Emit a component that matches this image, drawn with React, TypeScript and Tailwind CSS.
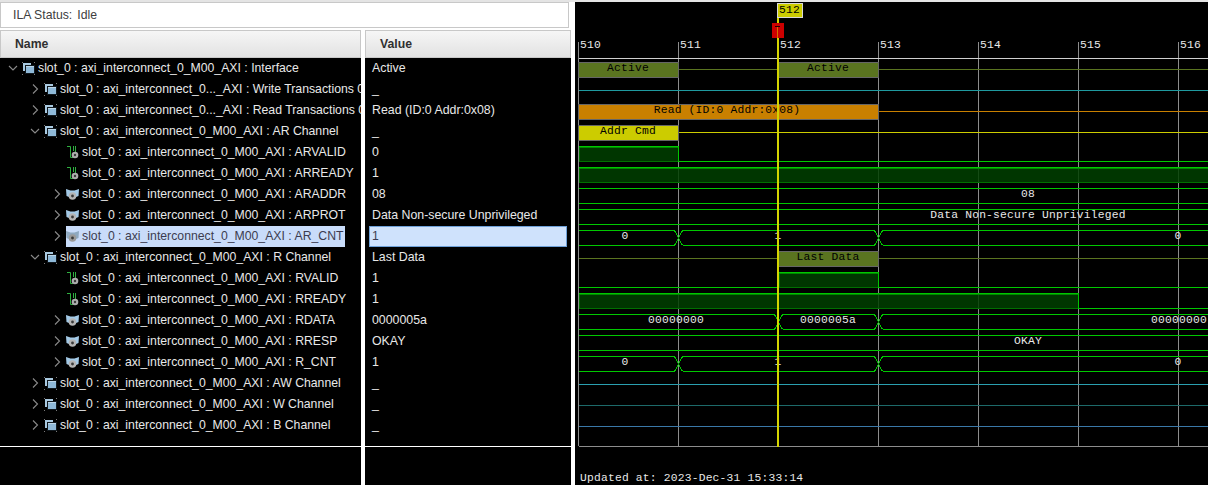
import React from "react";

type Kind = "group" | "bit" | "bus";
type Row = { level: 0 | 1 | 2; open?: boolean; leaf?: boolean; kind: Kind; name: string; value: string; selected?: boolean };

const P = "slot_0 : axi_interconnect_0_M00_AXI : ";
const rows: Row[] = [
  { level: 0, open: true, kind: "group", name: P + "Interface", value: "Active" },
  { level: 1, kind: "group", name: "slot_0 : axi_interconnect_0..._AXI : Write Transactions 0", value: "_" },
  { level: 1, kind: "group", name: "slot_0 : axi_interconnect_0..._AXI : Read Transactions 0", value: "Read (ID:0 Addr:0x08)" },
  { level: 1, open: true, kind: "group", name: P + "AR Channel", value: "_" },
  { level: 2, leaf: true, kind: "bit", name: P + "ARVALID", value: "0" },
  { level: 2, leaf: true, kind: "bit", name: P + "ARREADY", value: "1" },
  { level: 2, kind: "bus", name: P + "ARADDR", value: "08" },
  { level: 2, kind: "bus", name: P + "ARPROT", value: "Data Non-secure Unprivileged" },
  { level: 2, kind: "bus", name: P + "AR_CNT", value: "1", selected: true },
  { level: 1, open: true, kind: "group", name: P + "R Channel", value: "Last Data" },
  { level: 2, leaf: true, kind: "bit", name: P + "RVALID", value: "1" },
  { level: 2, leaf: true, kind: "bit", name: P + "RREADY", value: "1" },
  { level: 2, kind: "bus", name: P + "RDATA", value: "0000005a" },
  { level: 2, kind: "bus", name: P + "RRESP", value: "OKAY" },
  { level: 2, kind: "bus", name: P + "R_CNT", value: "1" },
  { level: 1, kind: "group", name: P + "AW Channel", value: "_" },
  { level: 1, kind: "group", name: P + "W Channel", value: "_" },
  { level: 1, kind: "group", name: P + "B Channel", value: "_" },
];

const indent = { 0: "pl-0", 1: "pl-[22px]", 2: "pl-[44px]" };

function Chevron({ open }: { open?: boolean }) {
  return (
    <svg width="12" height="12" viewBox="0 0 12 12" fill="none" stroke="#8a8a8a" strokeWidth="1.1" className="-mt-px">
      {open ? <path d="M2 4l4 4 4-4" /> : <path d="M4 1.5l4.5 4.5L4 10.5" />}
    </svg>
  );
}

function KindIcon({ kind, selected }: { kind: Kind; selected?: boolean }) {
  if (kind === "group")
    return (
      <svg width="13" height="13" viewBox="0 0 13 13" className="-mt-px shrink-0">
        <rect x="1" y="1" width="8" height="8" fill="#a9c9e0" />
        <rect x="3" y="3" width="10" height="9" fill="#10181e" />
        <rect x="4" y="4" width="8" height="7" fill="#8fb9d8" />
        <rect x="4" y="4" width="8" height="1" fill="#bcd6e8" />
        <path d="M0 0h1v1H0zM12 0h1v1h-1zM0 12h1v1H0zM12 12h1v1h-1z" fill="#7a7a7a" />
      </svg>
    );
  if (kind === "bit")
    return (
      <svg width="13" height="14" viewBox="0 0 13 14" className="-mt-px ml-px mr-[-1px] shrink-0">
        <path d="M0 1.5H3.5V12.5H6M8.5 1V7M6.5 1V6" fill="none" stroke="#2fb040" strokeWidth="1" />
        <circle cx="8" cy="10" r="3.3" fill="#adadad" />
        <circle cx="8" cy="10" r="1.2" fill="#3a3a3a" />
      </svg>
    );
  return (
    <svg width="13" height="13" viewBox="0 0 13 13" className="-mt-px shrink-0">
      <path d="M0 1L4.5 2.5H8.5L13 1 12.5 8 10 9H3L.5 8Z" fill={selected ? "#8fa9c0" : "#a3c9e6"} />
      <circle cx="6.5" cy="8" r="3.8" fill={selected ? "#9a9a9a" : "#b4b4b4"} />
      <circle cx="6.5" cy="8" r="1.4" fill="#3a3a3a" />
    </svg>
  );
}

function TreeRow({ r }: { r: Row }) {
  return (
    <div className={`flex h-[21px] items-center whitespace-nowrap ${indent[r.level]}`}>
      <div className="flex w-[22px] shrink-0 justify-center pl-1">{!r.leaf && <Chevron open={r.open} />}</div>
      <div className={`flex h-[21px] items-center gap-[3px] pr-[2px] ${r.selected ? "bg-[#c9dcfa] text-[#3c3c50]" : "text-[#e8e8e8]"}`}>
        <KindIcon kind={r.kind} selected={r.selected} />
        <span className="pb-px">{r.name}</span>
      </div>
    </div>
  );
}

function ValueRow({ r }: { r: Row }) {
  if (r.selected)
    return (
      <div className="ml-1 flex h-[21px] w-[198px] items-center border border-[#6ea0d8] bg-[#cfe2fc] pb-px pl-[2px] text-[#3c3c50]">{r.value}</div>
    );
  return <div className="flex h-[21px] items-center whitespace-nowrap pb-px pl-[7px] text-[12.35px] text-[#e8e8e8]">{r.value}</div>;
}

function Column({ title, width, children }: { title: string; width: string; children: React.ReactNode }) {
  return (
    <div className={`flex h-full shrink-0 flex-col bg-black ${width}`}>
      <div className="flex h-[28px] shrink-0 items-center border border-[#c8c8c8] bg-gradient-to-b from-[#f6f6f6] to-[#e2e2e2] pl-[14px] font-bold text-[#303030]">
        {title}
      </div>
      <div className="h-[388px] shrink-0 overflow-hidden">{children}</div>
      <div className="h-px shrink-0 bg-white" />
    </div>
  );
}

const X0 = 578.5;
const grid = [578.5, 678.5, 778.5, 878.5, 978.5, 1078.5, 1178.5];
const W = 1208;
const GREEN = "#00c800";

function Lbl({ x, y, t, fill = "#e8e8e8", anchor = "middle" }: { x: number; y: number; t: string; fill?: string; anchor?: "middle" | "start" }) {
  return (
    <text x={x} y={y} fill={fill} textAnchor={anchor} className="font-['Liberation_Mono',monospace] text-[11.3px] tracking-[0.2px]">
      {t}
    </text>
  );
}

function Bar({ x, y, w, fill }: { x: number; y: number; w: number; fill: string }) {
  return <rect x={x} y={y} width={w} height={15} fill={fill} stroke="#666" strokeWidth="1" />;
}

function HBar({ x, y, w }: { x: number; y: number; w: number }) {
  return (
    <g>
      <rect x={x} y={y} width={w} height={15} fill="#004000" fillOpacity="0.85" />
      <path d={`M${x + 1} ${y + 15}V${y}`} stroke="#007000" />
      <path d={`M${x} ${y + 15}H${x + w}`} stroke="#007000" />
      <path d={`M${x} ${y}H${x + w}`} stroke={GREEN} strokeWidth="1" />
      <path d={`M${x} ${y + 1}H${x + w}`} stroke="#008800" strokeWidth="1" />
      <path d={`M${x + w} ${y}V${y + 15}`} stroke={GREEN} />
    </g>
  );
}

function BusLines({ top, xs }: { top: number; xs: number[] }) {
  const y1 = top + 0.5;
  const y2 = top + 15.5;
  const d: string[] = [];
  let start = X0;
  for (const t of xs) {
    d.push(`M${start} ${y1}H${t - 4}L${t + 4} ${y2}`);
    d.push(`M${start} ${y2}H${t - 4}L${t + 4} ${y1}`);
    start = t + 4;
  }
  d.push(`M${start} ${y1}H${W}M${start} ${y2}H${W}`);
  return <path d={d.join("")} fill="none" stroke={GREEN} strokeWidth="1" />;
}

function Wave() {
  const hl = (y: number, c: string, x1 = X0) => <path d={`M${x1} ${y}H${W}`} stroke={c} strokeWidth="1" />;
  return (
    <svg width="633" height="483" viewBox="575 2 633 483" className="block" shapeRendering="crispEdges">
      <rect x="575" y="2" width="633" height="483" fill="#000" />
      {grid.map((g) => (
        <path key={g} d={`M${g} 42V446`} stroke="#8c8c8c" />
      ))}
      {hl(58.5, "#d0d0d0")}
      {[510, 511, 512, 513, 514, 515, 516].map((n, i) => (
        <Lbl key={n} x={grid[i] + 1.5} y={48} t={String(n)} anchor="start" />
      ))}

      {hl(69.5, "#5a7420")}
      <Bar x={578.5} y={62.5} w={100} fill="#5a7420" />
      <Bar x={778.5} y={62.5} w={100} fill="#5a7420" />
      <Lbl x={628} y={71} t="Active" fill="#000" />
      <Lbl x={828} y={71} t="Active" fill="#000" />

      {hl(90.5, "#1f9a9f")}

      {hl(111.5, "#c98000", 878.5)}
      <Bar x={578.5} y={104.5} w={300} fill="#c98000" />
      <Lbl x={727} y={113} t="Read (ID:0 Addr:0x08)" fill="#000" />

      {hl(132.5, "#cccc00", 678.5)}
      <Bar x={578.5} y={125.5} w={100} fill="#cccc00" />
      <Lbl x={628} y={134} t="Addr Cmd" fill="#000" />

      {hl(161.5, GREEN, 678.5)}
      <HBar x={578.5} y={146.5} w={100} />
      <HBar x={578.5} y={167.5} w={630} />

      <BusLines top={188} xs={[]} />
      <Lbl x={1028} y={197} t="08" />
      <BusLines top={209} xs={[]} />
      <Lbl x={1028} y={218} t="Data Non-secure Unprivileged" />
      <BusLines top={230} xs={[678.5, 878.5]} />
      <Lbl x={625} y={239} t="0" />
      <Lbl x={778} y={239} t="1" />
      <Lbl x={1178} y={239} t="0" />

      {hl(258.5, "#5a7420")}
      <Bar x={778.5} y={251.5} w={100} fill="#5a7420" />
      <Lbl x={828} y={260} t="Last Data" fill="#000" />

      <path d={`M${X0} 287.5H778.5M878.5 287.5H${W}`} stroke={GREEN} />
      <HBar x={778.5} y={272.5} w={100} />

      <path d={`M1078.5 308.5H${W}`} stroke={GREEN} />
      <HBar x={578.5} y={293.5} w={500} />

      <BusLines top={314} xs={[778.5, 878.5]} />
      <Lbl x={676} y={323} t="00000000" />
      <Lbl x={828} y={323} t="0000005a" />
      <Lbl x={1179} y={323} t="00000000" />

      <BusLines top={335} xs={[]} />
      <Lbl x={1028} y={344} t="OKAY" />
      <BusLines top={356} xs={[678.5, 878.5]} />
      <Lbl x={625} y={365} t="0" />
      <Lbl x={778} y={365} t="1" />
      <Lbl x={1178} y={365} t="0" />

      {hl(384.5, "#2a9fb0")}
      {hl(405.5, "#1d6a6a")}
      {hl(426.5, "#3a78a8")}
      {hl(446.5, "#8c8c8c")}

      <rect x="777" y="17" width="2" height="430" fill="#d4d400" />
      <rect x="772" y="23" width="12" height="15" fill="#cc0000" />
      <rect x="775" y="26" width="5" height="1" fill="#200000" />
      <rect x="777" y="27" width="1" height="11" fill="#d47000" />
      <rect x="777.5" y="3.5" width="25" height="14" fill="#cccc00" stroke="#d8d8d8" />
      <Lbl x={779} y={13} t="512" fill="#000" anchor="start" />

      <Lbl x={580} y={481} t="Updated at: 2023-Dec-31 15:33:14" anchor="start" />
    </svg>
  );
}

export default function App() {
  return (
    <div className="flex h-[485px] w-[1208px] flex-col overflow-hidden bg-white font-['Liberation_Sans',Arial,sans-serif] text-[12.25px]">
      <div className="h-[2px] shrink-0 bg-[#e4e4e4]" />
      <div className="flex min-h-0 flex-1">
        <div className="flex w-[571px] shrink-0 flex-col">
          <div className="flex h-[26px] w-[569px] shrink-0 items-center gap-[5px] border border-[#c8c8c8] bg-white pl-3 text-[#404040]">
            <span>ILA Status:</span>
            <span>Idle</span>
          </div>
          <div className="mt-[2px] flex min-h-0 flex-1 gap-1">
            <Column title="Name" width="w-[361px]">
              {rows.map((r) => (
                <TreeRow key={r.name} r={r} />
              ))}
            </Column>
            <Column title="Value" width="w-[206px]">
              {rows.map((r) => (
                <ValueRow key={r.name} r={r} />
              ))}
            </Column>
          </div>
        </div>
        <div className="ml-1 min-w-0 flex-1">
          <Wave />
        </div>
      </div>
    </div>
  );
}
